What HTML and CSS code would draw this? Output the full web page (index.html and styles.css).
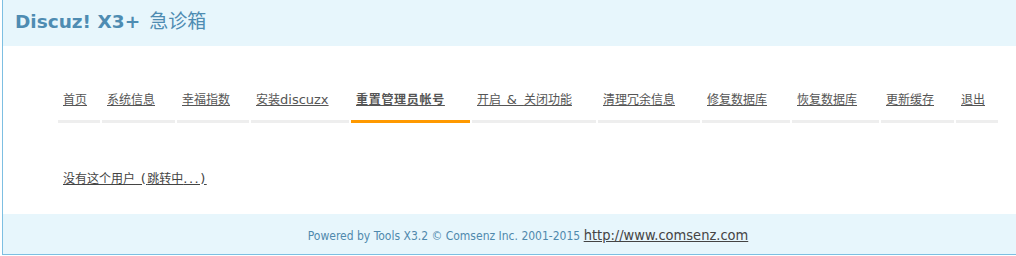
FILE: index.html
```html
<!DOCTYPE html>
<html lang="zh-CN">
<head>
<meta charset="utf-8">
<title>Discuz! X3+ 急诊箱</title>
<link rel="stylesheet" href="styles.css">
</head>
<body>
<div class="page">
  <div class="head"><span class="brand">Discuz! X3+</span><span class="cn">急诊箱</span></div>
  <div class="main">
    <ul class="nav">
      <li><a href="#">首页</a></li>
      <li><a href="#">系统信息</a></li>
      <li><a href="#">幸福指数</a></li>
      <li><a href="#">安装<span class="lat">discuzx</span></a></li>
      <li class="on"><a href="#">重置管理员帐号</a></li>
      <li><a href="#">开启<span class="sym"> &amp; </span>关闭功能</a></li>
      <li><a href="#">清理冗余信息</a></li>
      <li><a href="#">修复数据库</a></li>
      <li><a href="#">恢复数据库</a></li>
      <li><a href="#">更新缓存</a></li>
      <li><a href="#">退出</a></li>
    </ul>
    <p class="msg"><a href="#">没有这个用户<span class="sym"> (</span>跳转中<span class="sym">...)</span></a></p>
  </div>
  <div class="foot">Powered by Tools X3.2 &copy; Comsenz Inc. 2001-2015 <a href="#">http://www.comsenz.com</a></div>
</div>
</body>
</html>
```
FILE: styles.css
```css
html, body {
  margin: 0;
  padding: 0;
  overflow: hidden;
}
body {
  background: #fff;
  font-family: "DejaVu Sans Condensed", "DejaVu Sans", "Noto Sans CJK SC", sans-serif;
  font-size: 12px;
  color: #333;
}
.page {
  width: 1050px;
  margin-left: 2px;
  border-left: 1px solid #7dbfe2;
  border-right: 1px solid #7dbfe2;
  border-bottom: 1px solid #7dbfe2;
}
.head {
  height: 46px;
  box-sizing: border-box;
  padding: 8px 0 0 12px;
  background: #e7f6fc;
  color: #4e8cb2;
  line-height: 24px;
  white-space: nowrap;
}
.brand {
  font-family: "DejaVu Sans", sans-serif;
  font-weight: bold;
  font-size: 18.5px;
}
.cn {
  margin-left: 9px;
  font-family: "Noto Sans CJK SC", sans-serif;
  font-size: 19px;
}
.main {
  height: 168px;
  box-sizing: border-box;
  padding: 44px 55px 0;
}
.nav {
  list-style: none;
  margin: 0;
  padding: 0;
  display: grid;
  grid-template-columns: 42px 73px 72px 98px 119px 124px 102px 88px 87px 73px 42px;
  column-gap: 2px;
}
.nav li {
  padding: 0 0 11px 5px;
  line-height: 18px;
  border-bottom: 3px solid #eeeeee;
  white-space: nowrap;
}
.nav li.on {
  border-bottom-color: #ff9900;
  font-weight: bold;
}
.nav li.on a {
  letter-spacing: 0.7px;
}
.nav a {
  color: #555;
  text-decoration: underline;
  font-family: "Noto Sans CJK SC", sans-serif;
}
.nav .lat {
  font-family: "DejaVu Sans", sans-serif;
  font-size: 13px;
}
.sym {
  font-family: "DejaVu Sans", sans-serif;
  font-size: 13px;
  letter-spacing: 1.5px;
}
.msg {
  margin: 46px 0 0 5px;
  line-height: 18px;
}
.msg a {
  color: #444;
  font-family: "Noto Sans CJK SC", sans-serif;
}
.foot {
  height: 40px;
  box-sizing: border-box;
  padding-top: 12px;
  line-height: 18px;
  background: #e7f6fc;
  color: #4f89ad;
  text-align: center;
  white-space: nowrap;
}
.foot a {
  color: #444;
  font-size: 14.5px;
}
```
